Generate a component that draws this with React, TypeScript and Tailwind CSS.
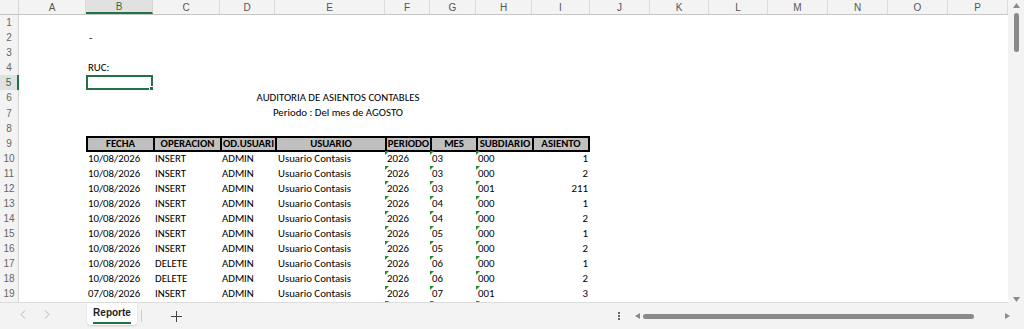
import React from "react";

// column letters + widths (px), grid starts after the 19px row-number gutter
const COLS = [
  { l: "A", w: "w-[67px]" },
  { l: "B", w: "w-[67px]" },
  { l: "C", w: "w-[67px]" },
  { l: "D", w: "w-[55px]" },
  { l: "E", w: "w-[110px]" },
  { l: "F", w: "w-[45px]" },
  { l: "G", w: "w-[46px]" },
  { l: "H", w: "w-[56px]" },
  { l: "I", w: "w-[58px]" },
  { l: "J", w: "w-[60px]" },
  { l: "K", w: "w-[59px]" },
  { l: "L", w: "w-[59px]" },
  { l: "M", w: "w-[60px]" },
  { l: "N", w: "w-[60px]" },
  { l: "O", w: "w-[60px]" },
  { l: "P", w: "w-[60px]" },
];

const HEAD = [
  { t: "FECHA", w: "w-[67px]" },
  { t: "OPERACION", w: "w-[67px]" },
  { t: "OD.USUARI", w: "w-[55px]" },
  { t: "USUARIO", w: "w-[110px]" },
  { t: "PERIODO", w: "w-[45px]" },
  { t: "MES", w: "w-[46px]" },
  { t: "SUBDIARIO", w: "w-[56px]" },
  { t: "ASIENTO", w: "w-[58px]" },
];

const ROWS = [
  ["10/08/2026", "INSERT", "ADMIN", "Usuario Contasis", "2026", "03", "000", "1"],
  ["10/08/2026", "INSERT", "ADMIN", "Usuario Contasis", "2026", "03", "000", "2"],
  ["10/08/2026", "INSERT", "ADMIN", "Usuario Contasis", "2026", "03", "001", "211"],
  ["10/08/2026", "INSERT", "ADMIN", "Usuario Contasis", "2026", "04", "000", "1"],
  ["10/08/2026", "INSERT", "ADMIN", "Usuario Contasis", "2026", "04", "000", "2"],
  ["10/08/2026", "INSERT", "ADMIN", "Usuario Contasis", "2026", "05", "000", "1"],
  ["10/08/2026", "INSERT", "ADMIN", "Usuario Contasis", "2026", "05", "000", "2"],
  ["10/08/2026", "DELETE", "ADMIN", "Usuario Contasis", "2026", "06", "000", "1"],
  ["10/08/2026", "DELETE", "ADMIN", "Usuario Contasis", "2026", "06", "000", "2"],
  ["07/08/2026", "INSERT", "ADMIN", "Usuario Contasis", "2026", "07", "001", "3"],
  ["07/08/2026", "INSERT", "ADMIN", "Usuario Contasis", "2026", "07", "001", "4"],
];

function RowNum({ n, active }: { n: number; active?: boolean }) {
  return (
    <div
      className={
        active
          ? "flex w-[19px] shrink-0 items-center justify-center border-r-2 border-[#217346] bg-[#e1e1e1] font-['Liberation_Sans',sans-serif] text-[10px] text-[#217346]"
          : "flex w-[19px] shrink-0 items-center justify-center border-r border-[#d4d4d4] bg-[#f3f3f3] font-['Liberation_Sans',sans-serif] text-[10px] text-[#666]"
      }
    >
      {n}
    </div>
  );
}

function Row({ n, children, active }: { n: number; children?: React.ReactNode; active?: boolean }) {
  return (
    <div className="flex h-[15.08px] shrink-0">
      <RowNum n={n} active={active} />
      <div className="w-[67px] shrink-0" />
      {children}
    </div>
  );
}

function Flag() {
  return <span className="absolute left-0 top-0 h-0 w-0 border-t-[4px] border-r-[4px] border-t-[#1f8f1f] border-r-transparent" />;
}

export default function App() {
  return (
    <div className="flex h-[329px] w-[1024px] flex-col overflow-hidden bg-[#f3f3f3] font-['Carlito','Liberation_Sans',sans-serif] text-black">
      <div className="flex h-[303px] shrink-0">
        {/* sheet */}
        <div className="flex w-[1008px] flex-col overflow-hidden border-b border-[#dcdcdc] bg-white">
          {/* column letters */}
          <div className="flex h-[15px] shrink-0 border-b border-[#c6c6c6] bg-[#f3f3f3] font-['Liberation_Sans',sans-serif] text-[10px] text-[#555]">
            <div className="w-[19px] shrink-0 border-r border-[#d4d4d4]" />
            {COLS.map((c) => (
              <div
                key={c.l}
                className={
                  c.l === "B"
                    ? `${c.w} flex shrink-0 items-center justify-center border-b-2 border-r border-b-[#217346] border-r-[#d4d4d4] bg-[#e1e1e1] text-[#217346]`
                    : `${c.w} flex shrink-0 items-center justify-center border-r border-[#dcdcdc]`
                }
              >
                {c.l}
              </div>
            ))}
          </div>

          <div className="flex flex-col text-[10.8px] leading-[15px]">
            <Row n={1} />
            <Row n={2}>
              <div className="pl-[3px]">-</div>
            </Row>
            <Row n={3} />
            <Row n={4}>
              <div className="pl-[2px]">RUC:</div>
            </Row>
            <Row n={5} active>
              <div className="relative h-[15px] w-[67px] border-2 border-[#217346]">
                <span className="absolute -bottom-[3px] -right-[3px] h-[5px] w-[5px] border border-white bg-[#217346]" />
              </div>
            </Row>
            <Row n={6}>
              <div className="w-[504px] text-center">AUDITORIA DE ASIENTOS CONTABLES</div>
            </Row>
            <Row n={7}>
              <div className="w-[504px] text-center">Periodo : Del mes de AGOSTO</div>
            </Row>
            <Row n={8} />
            <Row n={9}>
              <div className="flex">
                {HEAD.map((h, i) => (
                  <div
                    key={h.t}
                    className={`${h.w} flex h-[16px] shrink-0 items-center justify-center overflow-hidden whitespace-nowrap border-y-2 border-l-2 border-black bg-[#c0c0c0] font-bold ${i === HEAD.length - 1 ? "border-r-2" : ""}`}
                  >
                    {h.t}
                  </div>
                ))}
              </div>
            </Row>
            {ROWS.map((r, i) => (
              <Row key={i} n={10 + i}>
                <div className="w-[67px] shrink-0 pl-[2px]">{r[0]}</div>
                <div className="w-[67px] shrink-0 pl-[2px]">{r[1]}</div>
                <div className="w-[55px] shrink-0 pl-[2px]">{r[2]}</div>
                <div className="w-[110px] shrink-0 whitespace-nowrap pl-[3px]">{r[3]}</div>
                <div className="relative w-[45px] shrink-0 pl-[2px]">
                  <Flag />
                  {r[4]}
                </div>
                <div className="relative w-[46px] shrink-0 pl-[2px]">
                  <Flag />
                  {r[5]}
                </div>
                <div className="relative w-[56px] shrink-0 pl-[2px]">
                  <Flag />
                  {r[6]}
                </div>
                <div className="w-[56px] shrink-0 text-right">{r[7]}</div>
              </Row>
            ))}
          </div>
        </div>

        {/* vertical scrollbar */}
        <div className="flex w-[16px] flex-col items-center bg-[#f3f3f3] pt-[3px]">
          <svg width="7" height="5" viewBox="0 0 7 5">
            <path d="M3.5 0 L7 5 L0 5 Z" fill="#8a8a8a" />
          </svg>
          <div className="mt-[5px] h-[39px] w-[5px] rounded-full bg-[#8a8a8a]" />
          <div className="flex-1" />
          <svg width="7" height="5" viewBox="0 0 7 5" className="mb-[1px]">
            <path d="M0 0 L7 0 L3.5 5 Z" fill="#8a8a8a" />
          </svg>
        </div>
      </div>

      {/* sheet tabs + horizontal scrollbar */}
      <div className="flex h-[26px] shrink-0 items-start font-['Liberation_Sans',sans-serif]">
        <div className="flex h-[22px] w-[87px] shrink-0 items-center gap-[18px] pl-[20px]">
          <svg width="6" height="9" viewBox="0 0 6 9">
            <path d="M5 0.5 L1 4.5 L5 8.5" fill="none" stroke="#b4b4b4" strokeWidth="1" />
          </svg>
          <svg width="6" height="9" viewBox="0 0 6 9">
            <path d="M1 0.5 L5 4.5 L1 8.5" fill="none" stroke="#b4b4b4" strokeWidth="1" />
          </svg>
        </div>
        <div className="flex h-[22px] w-[50px] shrink-0 flex-col items-center rounded-b-[4px] bg-white pt-[4px] shadow-[0_1px_2px_rgba(0,0,0,0.15)]">
          <span className="text-[10px] font-semibold leading-[12px] text-[#222]">Reporte</span>
          <span className="mt-[3px] h-[2px] w-[38px] bg-[#217346]" />
        </div>
        <div className="ml-[4px] mt-[7px] h-[12px] w-px shrink-0 bg-[#c8c8c8]" />
        <svg width="11" height="11" viewBox="0 0 11 11" className="ml-[29px] mt-[8px]">
          <path d="M5.5 0 V11 M0 5.5 H11" stroke="#444" strokeWidth="1" />
        </svg>
        <div className="flex-1" />
        <div className="mt-[9px] flex flex-col gap-[1px]">
          <span className="h-[2px] w-[2px] bg-[#666]" />
          <span className="h-[2px] w-[2px] bg-[#666]" />
          <span className="h-[2px] w-[2px] bg-[#666]" />
        </div>
        <div className="ml-[15px] mr-[14px] mt-[10px] flex h-[6px] w-[375px] items-center">
          <svg width="5" height="6" viewBox="0 0 5 6">
            <path d="M5 0 L5 6 L0 3 Z" fill="#8a8a8a" />
          </svg>
          <div className="ml-[3px] h-[5px] w-[331px] rounded-full bg-[#8a8a8a]" />
          <div className="flex-1" />
          <svg width="5" height="6" viewBox="0 0 5 6">
            <path d="M0 0 L5 3 L0 6 Z" fill="#8a8a8a" />
          </svg>
        </div>
      </div>
    </div>
  );
}
